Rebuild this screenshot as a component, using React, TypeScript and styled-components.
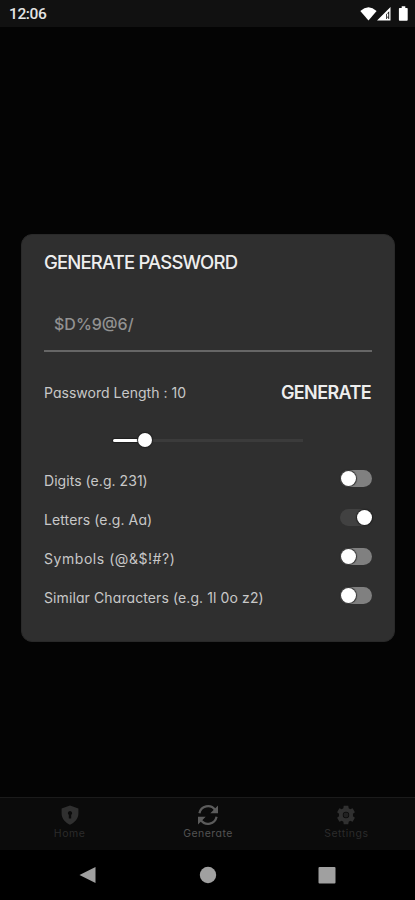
import React, { useState } from "react";
import styled, { createGlobalStyle } from "styled-components";

const GlobalStyle = createGlobalStyle`
  * { box-sizing: border-box; }
  body { margin: 0; background: #040404; }
`;

const Screen = styled.div`
  width: 415px;
  height: 900px;
  display: flex;
  flex-direction: column;
  overflow: hidden;
  background: #040404;
  font-family: Inter, "Liberation Sans", sans-serif;
  font-feature-settings: "cv11";
`;

const StatusBar = styled.header`
  height: 27px;
  flex: none;
  display: flex;
  align-items: center;
  justify-content: space-between;
  padding: 1px 6px 0 9px;
  background: #111111;
`;

const Clock = styled.span`
  font: 500 15.5px/20px Roboto, sans-serif;
  letter-spacing: -0.4px;
  color: #e4e4e4;
`;

const StatusIcons = styled.svg`
  display: block;
  width: 50px;
  height: 18px;
`;

const Content = styled.main`
  flex: 1;
  padding: 207px 20px 0 21px;
`;

const Card = styled.section`
  height: 408px;
  padding: 0 22px;
  border-radius: 11px;
  background: #2f2f2f;
  border: 1px solid #292929;
  display: flex;
  flex-direction: column;
`;

const Label = styled.span<{ $spacing: number }>`
  font-size: 14px;
  line-height: 20px;
  white-space: nowrap;
  color: #c8c8c8;
  letter-spacing: ${(p) => p.$spacing}px;
`;

const Title = styled.h1`
  margin: 13px 0 0;
  font-size: 18.5px;
  line-height: 28px;
  font-weight: 500;
  letter-spacing: -0.82px;
  white-space: nowrap;
  color: #eeeeee;
`;

const PasswordField = styled.div`
  height: 60px;
  margin-top: 16px;
  padding: 18px 10px 0 10px;
  border-bottom: 2px solid #666666;
  font-size: 16px;
  line-height: 28px;
  font-weight: 500;
  color: #929292;
  white-space: nowrap;
`;

const LengthRow = styled.div`
  display: flex;
  align-items: center;
  justify-content: space-between;
  height: 30px;
  margin-top: 26px;
`;

const GenerateButton = styled.button`
  border: 0;
  padding: 0 1px 0 0;
  background: none;
  color: #eeeeee;
  font-family: inherit;
  font-size: 18px;
  line-height: 28px;
  font-weight: 600;
  letter-spacing: -0.62px;
`;

const Slider = styled.div`
  display: flex;
  align-items: center;
  align-self: center;
  width: 190px;
  height: 14px;
  margin: 25px 0 14px;
`;

const SliderFill = styled.div`
  width: 25px;
  height: 3px;
  background: #ffffff;
  border-radius: 2px 0 0 2px;
  box-shadow: 0 0 1px 1px #202020;
`;

const SliderThumb = styled.div`
  width: 14px;
  height: 14px;
  border-radius: 50%;
  background: #ffffff;
  box-shadow: 0 0 1px 1px #202020;
  z-index: 1;
`;

const SliderRest = styled.div`
  flex: 1;
  height: 3px;
  background: #3b3b3b;
`;

const OptionRow = styled.div`
  display: flex;
  align-items: center;
  justify-content: space-between;
  height: 39px;
`;

const Toggle = styled.button<{ $on: boolean }>`
  display: flex;
  align-items: center;
  justify-content: ${(p) => (p.$on ? "flex-end" : "flex-start")};
  width: 32px;
  height: 17px;
  margin-bottom: 4px;
  padding: 0 0.5px;
  border: 0;
  border-radius: 9px;
  background: ${(p) => (p.$on ? "#414141" : "#808080")};
`;

const Knob = styled.span`
  width: 15px;
  height: 15px;
  border-radius: 50%;
  background: #ffffff;
  box-shadow: 0 0 1px 1px rgba(25, 25, 25, 0.75);
`;

const TabBar = styled.nav`
  height: 53px;
  flex: none;
  display: grid;
  grid-template-columns: repeat(3, 1fr);
  background: #0b0b0b;
  border-top: 1px solid #1b1b1b;
`;

const Tab = styled.div<{ $active?: boolean }>`
  display: flex;
  flex-direction: column;
  align-items: center;
  padding: 6px 0 0 1px;
  color: ${(p) => (p.$active ? "#5b5b5b" : "#303030")};
`;

const TabIcon = styled.svg`
  display: block;
  width: 22px;
  height: 22px;
`;

const TabLabel = styled.span<{ $spacing: number }>`
  margin-top: 1px;
  font-size: 10.5px;
  line-height: 14px;
  letter-spacing: ${(p) => p.$spacing}px;
  opacity: 0.9;
`;

const SystemBar = styled.footer`
  height: 50px;
  flex: none;
  display: flex;
  justify-content: space-between;
  align-items: center;
  padding: 0 78px;
  background: #000000;
`;

const SystemIcon = styled.svg`
  display: block;
  width: 20px;
  height: 20px;
  fill: #a0a0a0;
`;

const initialOptions = [
  { label: "Digits (e.g. 231)", on: false, spacing: 0.05 },
  { label: "Letters (e.g. Aa)", on: true, spacing: 0.1 },
  { label: "Symbols (@&$!#?)", on: false, spacing: 0.55 },
  { label: "Similar Characters (e.g. 1l 0o z2)", on: false, spacing: 0.1 },
];

export default function App() {
  const [options, setOptions] = useState(initialOptions);
  const toggle = (index: number) =>
    setOptions(options.map((o, i) => (i === index ? { ...o, on: !o.on } : o)));

  return (
    <>
      <GlobalStyle />
      <Screen>
        <StatusBar>
          <Clock>12:06</Clock>
          <StatusIcons viewBox="0 0 50 18" fill="#fff">
            <path d="M1.3 5.9Q9.5-1.3 17.6 5.9L9.5 15.5Z" />
            <path fillRule="evenodd" d="M31.5 2V15.5H18Zm-1.3 4.200-3 3v4.800h3Z" />
            <path d="M28 8.500h1.300v3.200H28zm0 4h1.300v1.500H28z" />
            <path d="M40.7 3h2V1.3h3.6V3h1.7q.7 0 .7.8v11q0 .9-.8.9h-7.2q-.8 0-.8-.9v-11q0-.8.8-.8Z" />
          </StatusIcons>
        </StatusBar>
        <Content>
          <Card>
            <Title>GENERATE PASSWORD</Title>
            <PasswordField>$D%9@6/</PasswordField>
            <LengthRow>
              <Label $spacing={0.02}>Password Length : 10</Label>
              <GenerateButton>GENERATE</GenerateButton>
            </LengthRow>
            <Slider>
              <SliderFill />
              <SliderThumb />
              <SliderRest />
            </Slider>
            {options.map((option, index) => (
              <OptionRow key={option.label}>
                <Label $spacing={option.spacing}>{option.label}</Label>
                <Toggle
                  $on={option.on}
                  role="switch"
                  aria-checked={option.on}
                  aria-label={option.label}
                  onClick={() => toggle(index)}
                >
                  <Knob />
                </Toggle>
              </OptionRow>
            ))}
          </Card>
        </Content>
        <TabBar>
          <Tab>
            <TabIcon viewBox="0 0 22 22">
              <path
                fill="currentColor"
                fillRule="evenodd"
                d="M11 1.5 19.4 4.6v5.2c0 5-4.2 9.2-8.4 11-4.2-1.8-8.4-6-8.4-11V4.6ZM11 7a2.2 2.2 0 0 0-1.2 4v3.5h2.4V11A2.2 2.2 0 0 0 11 7Z"
              />
            </TabIcon>
            <TabLabel $spacing={0.6}>Home</TabLabel>
          </Tab>
          <Tab $active>
            <TabIcon viewBox="0 0 22 22">
              <g fill="none" stroke="currentColor" strokeWidth="2.2">
                <path d="M2.4 9.2C4 1.800 13.500-.4 18.300 6" />
                <path d="M19.6 12.8C18 20.200 8.500 22.400 3.700 16" />
              </g>
              <path fill="currentColor" d="M21 1.5V9.2H13.3ZM1 20.5V12.8H8.7Z" />
            </TabIcon>
            <TabLabel $spacing={0.45}>Generate</TabLabel>
          </Tab>
          <Tab>
            <TabIcon viewBox="0 0 24 24">
              <path
                fill="currentColor"
                fillRule="evenodd"
                d="m9.5 2-.4 2.7-1.800 1-2.500-1-2.500 4.300 2.100 1.700v2.600l-2.100 1.700 2.500 4.300 2.500-1 1.800 1 .4 2.700h5l.4-2.700 1.800-1 2.500 1 2.500-4.300-2.100-1.700v-2.600l2.100-1.700-2.500-4.300-2.500 1-1.800-1-.4-2.700ZM12 8.500a3.500 3.500 0 1 1 0 7 3.500 3.500 0 0 1 0-7Z"
              />
              <circle cx="12" cy="12" r="2.7" fill="currentColor" opacity=".6" />
            </TabIcon>
            <TabLabel $spacing={0.5}>Settings</TabLabel>
          </Tab>
        </TabBar>
        <SystemBar>
          <SystemIcon viewBox="0 0 20 20"><path d="M17.5 2v16L1.5 10Z" /></SystemIcon>
          <SystemIcon viewBox="0 0 20 20"><circle cx="10" cy="10" r="8.2" /></SystemIcon>
          <SystemIcon viewBox="0 0 20 20"><rect x="1.5" y="2" width="17" height="16.5" rx="1" /></SystemIcon>
        </SystemBar>
      </Screen>
    </>
  );
}
